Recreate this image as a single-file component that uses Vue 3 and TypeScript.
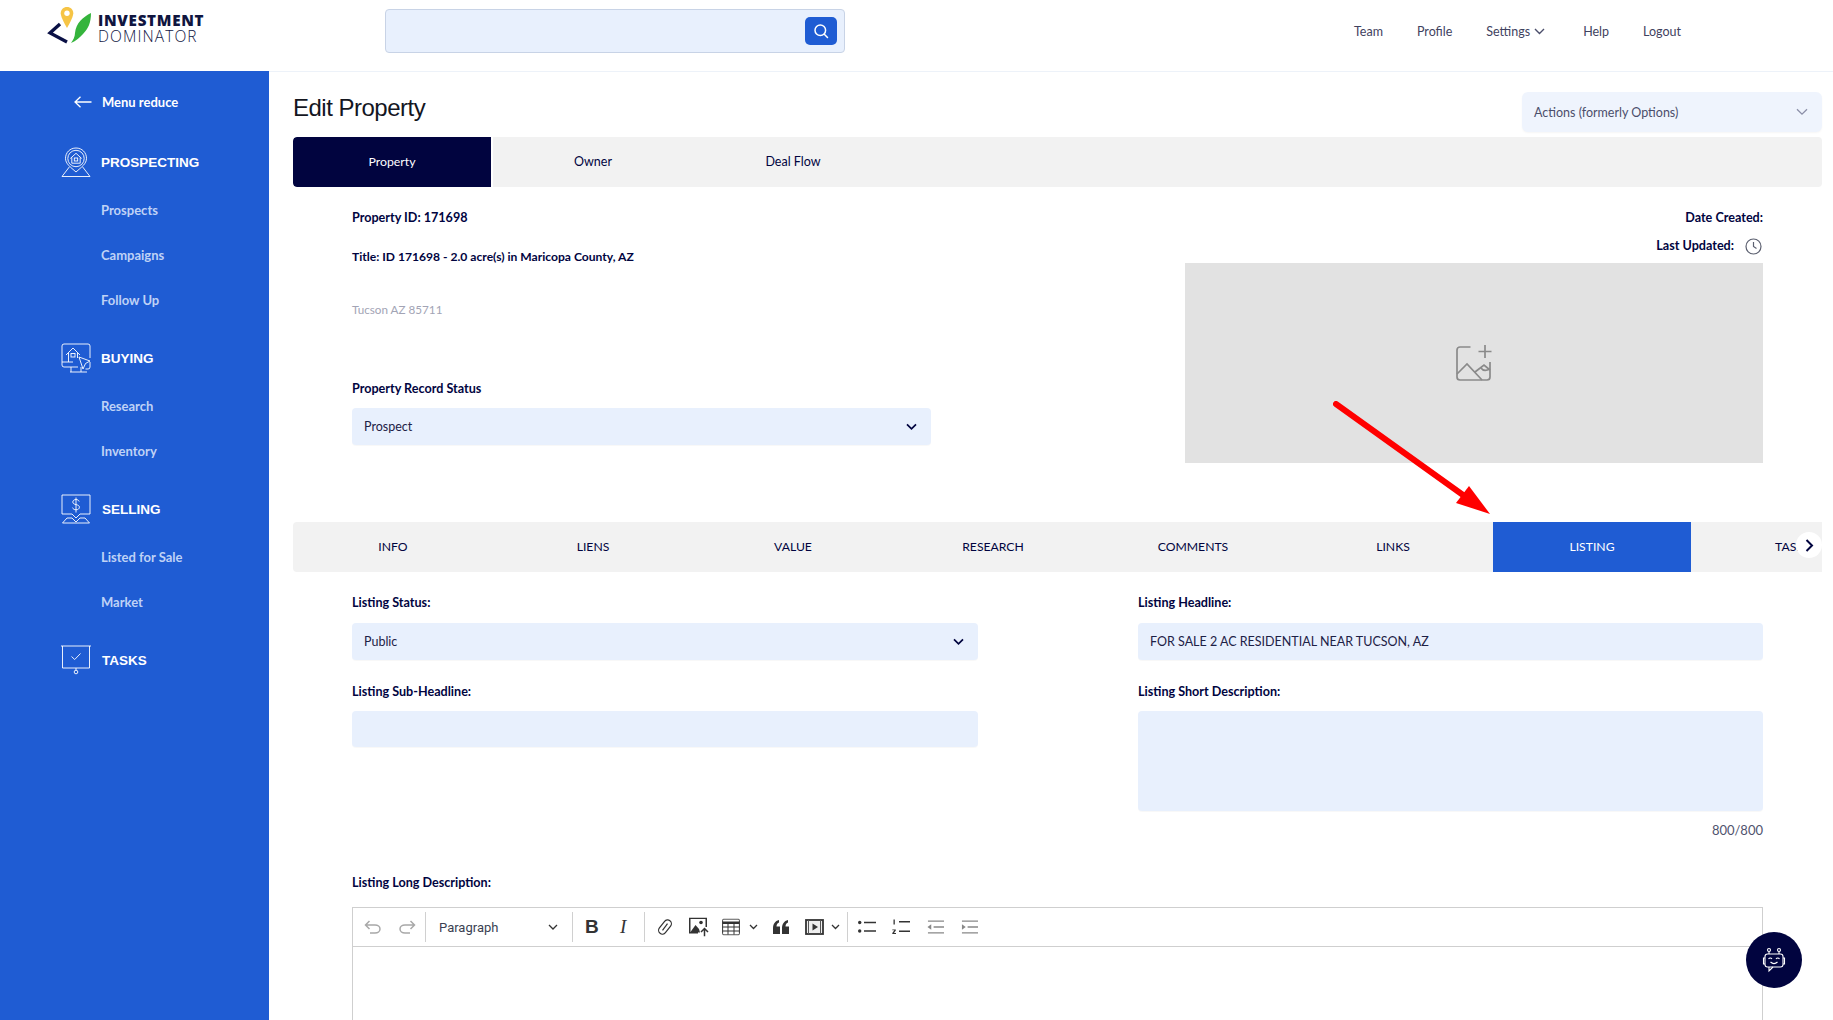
<script setup lang="ts">
const mainTabs = ['Property', 'Owner', 'Deal Flow']
const subTabs = ['INFO', 'LIENS', 'VALUE', 'RESEARCH', 'COMMENTS', 'LINKS', 'LISTING', 'TASKS']
const navItems = ['Team', 'Profile']
</script>

<template>
  <div class="app">
    <header class="header">
      <div class="logo">
        <svg class="logo-mark" width="50" height="40" viewBox="0 0 50 40">
          <path d="M21 1c-3.600 0-6.300 2.700-6.300 6.200 0 4.300 6.300 14.800 6.300 14.800s6.300-10.500 6.300-14.800C27.300 3.700 24.600 1 21 1z" fill="#f6c445" />
          <circle cx="21" cy="7.200" r="2.700" fill="#fff" />
          <path d="M14 18 4 27l17 9" fill="none" stroke="#0a1045" stroke-width="3.300" />
          <path d="M45 7c0 10-3 16-8 21-3 3-7 7-12 9 2-3 4-6 4-10 1-10 8-16 16-20z" fill="#35b43c" />
        </svg>
        <div class="logo-text">
          <span class="logo-a">INVESTMENT</span>
          <span class="logo-b">DOMINATOR</span>
        </div>
      </div>
      <div class="search">
        <button class="search-btn" type="button" aria-label="Search">
          <svg width="16" height="16" viewBox="0 0 16 16" fill="none" stroke="#fff" stroke-width="1.500">
            <circle cx="7.300" cy="7.300" r="5.300" />
            <path d="m11.300 11.300 3.200 3.200" stroke-linecap="round" />
          </svg>
        </button>
      </div>
      <nav class="nav">
        <a v-for="n in navItems" :key="n" class="nav-item">{{ n }}</a>
        <a class="nav-item settings">Settings
          <svg width="11" height="7" viewBox="0 0 11 7" fill="none" stroke="#4b4e6b" stroke-width="1.400"><path d="m1 1 4.500 4.500L10 1" /></svg>
        </a>
        <a class="nav-item">Help</a>
        <a class="nav-item">Logout</a>
      </nav>
    </header>

    <div class="body">
      <aside class="sidebar">
        <div class="reduce">
          <svg width="18" height="12" viewBox="0 0 18 12" fill="none" stroke="#fff" stroke-width="1.300"><path d="M17.500 6H1M6.500.7 1 6l5.500 5.300" /></svg>
          <span>Menu reduce</span>
        </div>

        <div class="group g1">
          <svg class="gicon" width="30" height="30" viewBox="0 0 30 30" fill="none" stroke="#fff" stroke-width=".9">
            <path d="M15 1C9 1 4.500 5.600 4.500 11.300c0 5.600 5 8.700 10.500 13.700 5.500-5 10.500-8.100 10.500-13.700C25.500 5.600 21 1 15 1z" />
            <circle cx="15" cy="11.500" r="8.200" />
            <path d="M9.300 11.500 15 6.300l5.700 5.200M10.800 10.400v5.800h8.400v-5.800" />
            <rect x="13.300" y="11" width="3.400" height="3" />
            <path d="M8.300 20 1 29.500h28L21.700 20" />
          </svg>
          <span>PROSPECTING</span>
        </div>
        <a class="sub s1">Prospects</a>
        <a class="sub">Campaigns</a>
        <a class="sub">Follow Up</a>

        <div class="group g2">
          <svg class="gicon" width="30" height="30" viewBox="0 0 30 30" fill="none" stroke="#fff" stroke-width=".9">
            <path d="M17 24H3a2 2 0 0 1-2-2V3a2 2 0 0 1 2-2h24a2 2 0 0 1 2 2v12" />
            <path d="M1 19h11M10 24v5M20 24v5M9 29h17" />
            <path d="M5 12l7-7 7 7M7.500 10v9M16.500 10v5" />
            <rect x="10" y="10.500" width="4" height="3.500" />
            <path d="m18 14 11 4-4.500 2.500L22 26z" />
            <path d="M24.500 26H27a2 2 0 0 0 2-2v-5" />
          </svg>
          <span>BUYING</span>
        </div>
        <a class="sub s1">Research</a>
        <a class="sub">Inventory</a>

        <div class="group g3">
          <svg class="gicon" width="30" height="30" viewBox="0 0 30 30" fill="none" stroke="#fff" stroke-width=".9">
            <path d="M11 20H1V1h28v19H19l-4 4z" />
            <path d="M6 24 1.500 29h27L24 24h-5l-4 4-4-4z" />
            <path d="M18.200 7.500c-.5-1.300-1.700-2-3.200-2-1.800 0-3.200 1-3.200 2.500 0 3.600 6.600 1.600 6.600 5.200 0 1.600-1.500 2.600-3.400 2.600-1.700 0-3-.8-3.500-2.200M15 3.500v15" />
          </svg>
          <span>SELLING</span>
        </div>
        <a class="sub s1">Listed for Sale</a>
        <a class="sub">Market</a>

        <div class="group g4">
          <svg class="gicon" width="30" height="30" viewBox="0 0 30 30" fill="none" stroke="#fff" stroke-width=".9">
            <path d="M0 1h30M1.500 1v22h27V1M15 23v2.500" />
            <circle cx="15" cy="27" r="1.800" />
            <path d="m10.500 11.500 3.200 3 5.800-6" />
          </svg>
          <span>TASKS</span>
        </div>
      </aside>

      <main class="main">
        <div class="page-head">
          <h1>Edit Property</h1>
          <div class="actions">
            <span>Actions (formerly Options)</span>
            <svg width="12" height="8" viewBox="0 0 12 8" fill="none" stroke="#8b8fa8" stroke-width="1.300"><path d="m1 1.200 5 5 5-5" /></svg>
          </div>
        </div>

        <div class="tabs top-tabs">
          <div v-for="(t, i) in mainTabs" :key="t" class="tab" :class="{ dark: i === 0 }">{{ t }}</div>
        </div>

        <section class="info">
          <div class="info-left">
            <div class="line lb first">Property ID: 171698</div>
            <div class="line lb title">Title: ID 171698 - 2.0 acre(s) in Maricopa County, AZ</div>
            <div class="line addr">Tucson AZ 85711</div>
            <div class="line lb status">Property Record Status</div>
            <div class="field select record">
              <span>Prospect</span>
              <svg width="11" height="8" viewBox="0 0 11 8" fill="none" stroke="#01043f" stroke-width="1.700"><path d="m1 1.300 4.500 4.500L10 1.300" /></svg>
            </div>
          </div>
          <div class="info-right">
            <div class="line lb first rt">Date Created:</div>
            <div class="line lb rt updated">Last Updated:
              <svg width="17" height="17" viewBox="0 0 17 17" fill="none" stroke="#5c6070" stroke-width="1.200"><circle cx="8.500" cy="8.500" r="7.500" /><path d="M8.500 4v4.500l3 2" /></svg>
            </div>
            <div class="photo">
              <svg width="38" height="38" viewBox="0 0 38 38" fill="none" stroke="#8a8a8a" stroke-width="1.700">
                <path d="M15.500 3H5a3 3 0 0 0-3 3v27a3 3 0 0 0 3 3h27a3 3 0 0 0 3-3V18" />
                <path d="M30 1v13M23.500 7.500h13" />
                <path d="M2 30l10-10 15 16M20 28l9-7 6 5" />
                <path d="M26 24c2 3 5 3 9 1" />
              </svg>
            </div>
          </div>
        </section>

        <div class="tabs sub-tabs">
          <div v-for="t in subTabs" :key="t" class="tab" :class="{ blue: t === 'LISTING' }">{{ t }}</div>
          <div class="next">
            <svg width="9" height="13" viewBox="0 0 9 13" fill="none" stroke="#01043f" stroke-width="2"><path d="m1.500 1 5.500 5.500L1.500 12" /></svg>
          </div>
        </div>

        <section class="form">
          <div class="cell">
            <div class="line lb">Listing Status:</div>
            <div class="field select">
              <span>Public</span>
              <svg width="11" height="8" viewBox="0 0 11 8" fill="none" stroke="#01043f" stroke-width="1.700"><path d="m1 1.300 4.500 4.500L10 1.300" /></svg>
            </div>
          </div>
          <div class="cell">
            <div class="line lb">Listing Headline:</div>
            <div class="field"><span>FOR SALE 2 AC RESIDENTIAL NEAR TUCSON, AZ</span></div>
          </div>
          <div class="cell row2">
            <div class="line lb">Listing Sub-Headline:</div>
            <div class="field"></div>
          </div>
          <div class="cell row2">
            <div class="line lb">Listing Short Description:</div>
            <div class="field area"></div>
            <div class="line count">800/800</div>
          </div>
        </section>

        <div class="long">
          <div class="line lb">Listing Long Description:</div>
          <div class="editor">
            <div class="toolbar">
              <svg class="ti undo" width="18" height="14" viewBox="0 0 18 14" fill="none" stroke="#a8a8a8" stroke-width="1.500"><path d="M5.500 1 1.500 5l4 4M1.500 5H11a5 4 0 0 1 0 8H6" /></svg>
              <svg class="ti redo" width="18" height="14" viewBox="0 0 18 14" fill="none" stroke="#a8a8a8" stroke-width="1.500"><path d="m12.500 1 4 4-4 4M16.500 5H7a5 4 0 0 0 0 8h5" /></svg>
              <i class="sep s-a"></i>
              <div class="para"><span>Paragraph</span>
                <svg width="10" height="6" viewBox="0 0 10 6" fill="none" stroke="#333" stroke-width="1.300"><path d="m1 1 4 4 4-4" /></svg>
              </div>
              <i class="sep s-b"></i>
              <span class="ti bold">B</span>
              <span class="ti ital">I</span>
              <i class="sep s-c"></i>
              <svg class="ti link" width="16" height="18" viewBox="0 0 16 18" fill="none" stroke="#333" stroke-width="1.200"><rect x="4.200" y="1" width="7.600" height="16" rx="3.800" transform="rotate(38 8 9)" /><path d="m5.500 12.300 5-6.600" /></svg>
              <svg class="ti pic" width="20" height="19" viewBox="0 0 20 19"><path d="M0 0h18v9.500h-1.500V1.500h-15v13H9V16H0z" fill="#333" /><path d="M1.500 14.500 6.500 7.500l3.500 4 1 3.500z" fill="#333" /><circle cx="12" cy="5" r="1.800" fill="#333" /><path d="M15.500 19v-7.500M12 14.500l3.500-3.500 3.500 3.500" fill="none" stroke="#333" stroke-width="1.500" /></svg>
              <svg class="ti table" width="18" height="17" viewBox="0 0 18 17" fill="none" stroke="#333" stroke-width="1"><rect x=".6" y=".6" width="16.800" height="15.800" rx="1.200" /><path d="M.6 4.200h16.800" stroke-width="2.400" /><path d="M.6 8.500h16.800M.6 12.500h16.800M6 5v11M12 5v11" /></svg>
              <svg class="ti tchev" width="9" height="6" viewBox="0 0 9 6" fill="none" stroke="#333" stroke-width="1.300"><path d="m1 1 3.500 3.500L8 1" /></svg>
              <svg class="ti quote" width="16" height="14" viewBox="0 0 16 14" fill="#333"><path d="M0 14V8c0-4 2-7 6-8v2.500C4 3.500 3.500 5 3.500 6.500H7V14zM9 14V8c0-4 2-7 6-8v2.500C13 3.500 12.500 5 12.500 6.500H16V14z" /></svg>
              <svg class="ti media" width="19" height="16" viewBox="0 0 19 16"><rect x="1" y="1" width="17" height="14" fill="#eee" stroke="#333" stroke-width="1.800" /><path d="M3.500 1v14M15.500 1v14" stroke="#555" stroke-width="1" /><path d="m7.500 4.500 5.500 3.500-5.500 3.500z" fill="#333" /></svg>
              <svg class="ti mchev" width="9" height="6" viewBox="0 0 9 6" fill="none" stroke="#333" stroke-width="1.300"><path d="m1 1 3.500 3.500L8 1" /></svg>
              <i class="sep s-d"></i>
              <svg class="ti bul" width="18" height="14" viewBox="0 0 18 14" fill="#333"><circle cx="1.700" cy="2.500" r="1.700" /><circle cx="1.700" cy="11" r="1.700" /><path d="M6 1.700h12v1.500H6zM6 10.300h12v1.500H6z" /></svg>
              <svg class="ti num" width="18" height="16" viewBox="0 0 18 16" fill="#333"><path d="M1.500.5h1.300v5H1.500zM.3 10.500h3.500v1L2 14h2v1H.3v-1l2-2.700H.3zM7 2h11v1.500H7zM7 11.500h11V13H7z" /></svg>
              <svg class="ti out" width="17" height="14" viewBox="0 0 18 14" fill="#888"><path d="M1 0h17v1.400H1zM7 6.300h11v1.400H7zM1 12.600h17V14H1zM4.500 4v6L.5 7z" /></svg>
              <svg class="ti ind" width="17" height="14" viewBox="0 0 18 14" fill="#888"><path d="M1 0h17v1.400H1zM7 6.300h11v1.400H7zM1 12.600h17V14H1zM1 4v6l4-3z" /></svg>
            </div>
            <div class="editor-body"></div>
          </div>
        </div>
      </main>
    </div>

    <svg class="red-arrow" width="170" height="125" viewBox="0 0 170 125">
      <path d="M3 3 130 94" stroke="#ff0000" stroke-width="6" stroke-linecap="round" />
      <path d="M157 113 123 102 136 85z" fill="#ff0000" />
    </svg>

    <div class="bot">
      <svg width="26" height="26" viewBox="0 0 26 26" fill="none" stroke="#fff" stroke-width="1.100">
        <circle cx="8" cy="3" r="1.500" /><circle cx="18" cy="3" r="1.500" />
        <path d="M8 4.500V7M18 4.500V7" />
        <rect x="4" y="7" width="18" height="13" rx="2.500" />
        <path d="M4 11H2.500v6H4M22 11h1.500v6H22" />
        <path d="M7.500 12c1-1.300 2.500-1.300 3.500 0M15 12c1-1.300 2.500-1.300 3.500 0M9.500 15c2 1.800 5 1.800 7 0" />
        <path d="M8 20v4l4-4" />
      </svg>
    </div>
  </div>
</template>

<style>
html, body { margin: 0; background: #fff; }
</style>

<style scoped>
.app {
  position: relative;
  height: 1020px;
  overflow: hidden;
  display: flex;
  flex-direction: column;
  font-family: "Lato", "Open Sans", sans-serif;
  color: #01043f;
  font-size: 13px;
}
.header {
  flex: 0 0 71px;
  box-sizing: border-box;
  display: flex;
  align-items: flex-start;
}
.logo { width: 385px; height: 71px; display: flex; flex: none; padding: 6px 0 0 46px; box-sizing: border-box; }
.logo-mark { flex: none; }
.logo-text { display: flex; flex-direction: column; margin: 6px 0 0 2px; color: #10153f; }
.logo-a { font-family: "Open Sans", sans-serif; font-weight: 800; font-size: 15.200px; line-height: 17px; letter-spacing: .7px; }
.logo-b { font-family: "Open Sans", sans-serif; font-weight: 300; font-size: 15.500px; line-height: 15px; letter-spacing: 1.100px; }
.search {
  flex: none;
  width: 460px;
  height: 44px;
  margin-top: 9px;
  box-sizing: border-box;
  background: #e8f0fd;
  border: 1px solid #c8d3e6;
  border-radius: 4px;
  display: flex;
  justify-content: flex-end;
  align-items: center;
  padding-right: 7px;
}
.search-btn {
  width: 32px;
  height: 28px;
  border: 0;
  border-radius: 5px;
  background: #1f5cd3;
  display: flex;
  align-items: center;
  justify-content: center;
  padding: 0;
}
.nav { display: flex; margin-left: 509px; height: 62px; align-items: center; color: #3f4260; font-size: 12.500px; }
.nav-item { display: flex; align-items: center; gap: 4px; margin-right: 34px; white-space: nowrap; }
.nav .settings { margin-right: 38px; }

.body { flex: 1; display: flex; min-height: 0; }
.sidebar {
  flex: 0 0 269px;
  background: #1f5cd3;
  display: flex;
  flex-direction: column;
  color: #fff;
}
.reduce { display: flex; align-items: center; gap: 10px; padding-left: 74px; margin-top: 21px; height: 20px; font-size: 13px; font-weight: 700; }
.group { display: flex; align-items: center; gap: 10px; padding-left: 61px; height: 30px; font-family: "Liberation Sans", sans-serif; font-weight: 700; font-size: 13.500px; flex: none; }
.gicon { flex: none; }
.g1 { margin-top: 35px; }
.g2 { margin-top: 33px; }
.g3 { margin-top: 33px; gap: 11px; }
.g4 { margin-top: 33px; gap: 11px; }
.sub { display: block; padding-left: 101px; height: 20px; line-height: 20px; margin-top: 25px; color: #bfd2f6; font-weight: 700; font-size: 13px; flex: none; }
.s1 { margin-top: 23px; }

.main { flex: 1; min-width: 0; padding: 0 11px 0 24px; border-top: 1px solid #edf2f9; }
.page-head { height: 65px; display: flex; justify-content: space-between; align-items: flex-start; }
h1 { margin: 22px 0 0; font-family: "Liberation Sans", sans-serif; font-weight: 400; font-size: 24px; line-height: 28px; color: #14161f; letter-spacing: -.5px; }
.actions {
  width: 300px;
  height: 40px;
  margin-top: 20px;
  box-sizing: border-box;
  display: flex;
  align-items: center;
  justify-content: space-between;
  padding: 0 14px 0 12px;
  background: #eff4fd;
  border-radius: 6px;
  color: #4b4e6b;
  font-size: 12.500px;
  box-shadow: 0 1px 2px rgba(0, 0, 0, .04);
}
.tabs { position: relative; display: flex; height: 50px; background: #f2f2f2; overflow: hidden; }
.top-tabs { border-radius: 4px; }
.tab { flex: 0 0 200px; display: flex; align-items: center; justify-content: center; white-space: nowrap; font-size: 12.500px; color: #01043f; box-sizing: border-box; padding-bottom: 1px; }
.tab.dark { flex-basis: 198px; margin-right: 2px; background: #01043f; color: #fff; border-radius: 4px 0 0 4px; position: relative; font-size: 12.300px; }
.tab.dark::after { content: ""; position: absolute; right: -2px; top: 0; bottom: 0; width: 2px; background: #fff; }
.tab.blue { flex-basis: 198px; margin-right: 2px; background: #1f5cd3; color: #fff; }
.sub-tabs { margin-top: 59px; border-radius: 4px 0 0 4px; }
.sub-tabs .tab { font-size: 12.200px; }
.next {
  position: absolute;
  right: 0;
  top: 10px;
  width: 26px;
  height: 26px;
  border-radius: 50%;
  background: #fff;
  display: flex;
  align-items: center;
  justify-content: center;
}

.info { display: flex; justify-content: space-between; padding: 20px 59px 0; }
.info-left { width: 579px; }
.info-right { width: 578px; }
.line { height: 20px; line-height: 20px; white-space: nowrap; }
.lb { font-weight: 700; font-size: 12.600px; line-height: 22px; color: #01043f; }
.title { margin-top: 20px; font-size: 12.100px; line-height: 20px; }
.addr { margin-top: 32px; color: #a2a4b5; font-size: 11.700px; }
.status { margin-top: 59px; }
.rt { text-align: right; }
.updated { margin-top: 9px; display: flex; align-items: center; justify-content: flex-end; gap: 11px; margin-right: 1px; }
.photo { margin-top: 7px; height: 200px; background: #e2e2e2; display: flex; align-items: center; justify-content: center; }

.field {
  box-sizing: border-box;
  height: 37px;
  margin-top: 11px;
  background: #e8f0fd;
  border-radius: 4px;
  display: flex;
  align-items: center;
  padding: 0 12px;
  color: #1d2146;
  font-size: 12.500px;
  box-shadow: 0 1px 1px rgba(0, 0, 0, .03);
}
.select { justify-content: space-between; padding-right: 14px; }
.record { margin-top: 10px; }
.form { display: grid; grid-template-columns: 626px 1fr; column-gap: 160px; padding: 20px 59px 0; align-items: start; }
.row2 { margin-top: 21px; }
.row2 .field { margin-top: 10px; height: 36px; }
.row2 .area { height: 100px; }
.count { margin-top: 9px; text-align: right; color: #50536e; font-size: 13px; }
.long { padding: 0 59px; margin-top: 32px; }
.editor { margin-top: 15px; border: 1px solid #cfcfcf; border-bottom: 0; height: 200px; }
.toolbar { position: relative; height: 38px; border-bottom: 1px solid #cfcfcf; box-sizing: content-box; }
.ti { position: absolute; top: 50%; transform: translateY(-50%); color: #333; }
.sep { position: absolute; top: 4px; bottom: 4px; width: 1px; background: #d0d0d0; }
.undo { left: 11px; } .redo { left: 45px; }
.s-a { left: 72px; }
.para { position: absolute; left: 86px; width: 119px; top: 0; bottom: 0; display: flex; align-items: center; justify-content: space-between; font-family: "Roboto", sans-serif; font-size: 13px; color: #3a3f52; }
.s-b { left: 219px; }
.bold { left: 232px; font-family: "Liberation Sans", sans-serif; font-weight: 700; font-size: 19px; }
.ital { left: 267px; font-family: "Liberation Serif", serif; font-style: italic; font-size: 19px; }
.s-c { left: 291px; }
.link { left: 304px; } .pic { left: 336px; } .table { left: 369px; } .tchev { left: 396px; } .quote { left: 420px; } .media { left: 452px; } .mchev { left: 478px; }
.s-d { left: 494px; }
.bul { left: 505px; } .num { left: 539px; } .out { left: 574px; } .ind { left: 608px; }
.editor-body { height: 160px; }

.red-arrow { position: absolute; left: 1333px; top: 401px; }
.bot {
  position: absolute;
  left: 1746px;
  top: 932px;
  width: 56px;
  height: 56px;
  border-radius: 50%;
  background: #01043f;
  display: flex;
  align-items: center;
  justify-content: center;
}
</style>
